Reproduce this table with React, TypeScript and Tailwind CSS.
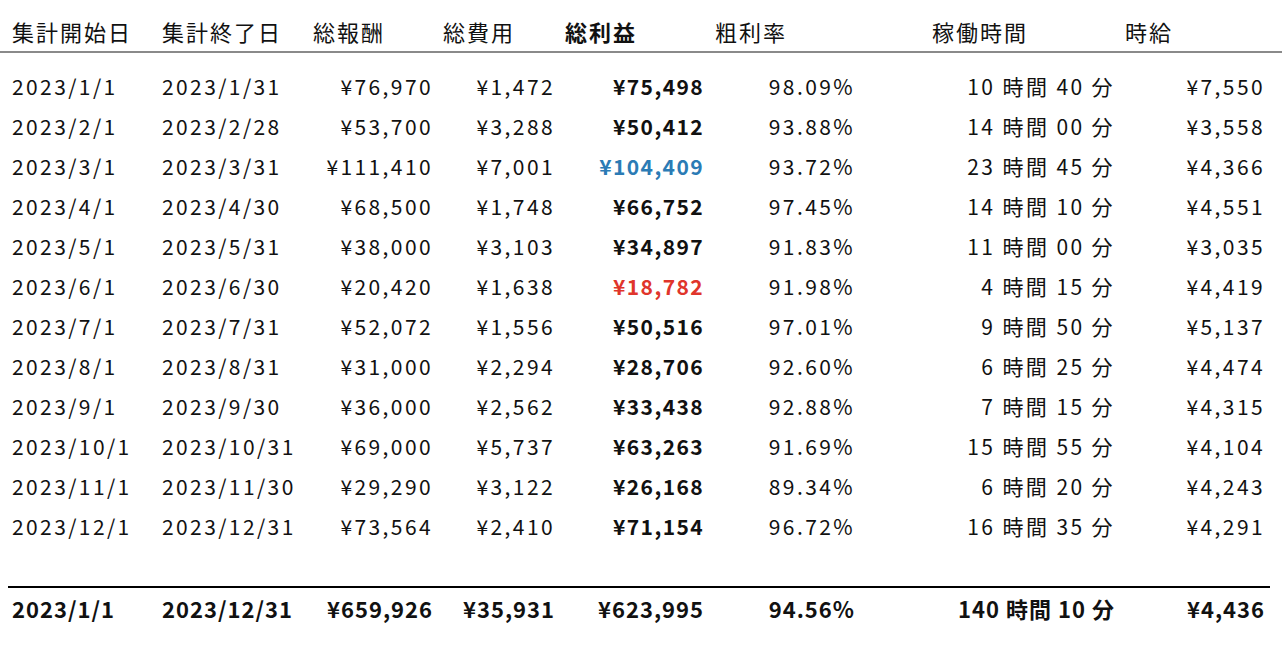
const headers = ['集計開始日', '集計終了日', '総報酬', '総費用', '総利益', '粗利率', '稼働時間', '時給'];

type Row = {
  start: string;
  end: string;
  revenue: string;
  cost: string;
  profit: string;
  margin: string;
  hours: string;
  wage: string;
  tone?: 'max' | 'min';
};

const rows: Row[] = [
  { start: '2023/1/1', end: '2023/1/31', revenue: '¥76,970', cost: '¥1,472', profit: '¥75,498', margin: '98.09%', hours: '10 時間 40 分', wage: '¥7,550' },
  { start: '2023/2/1', end: '2023/2/28', revenue: '¥53,700', cost: '¥3,288', profit: '¥50,412', margin: '93.88%', hours: '14 時間 00 分', wage: '¥3,558' },
  { start: '2023/3/1', end: '2023/3/31', revenue: '¥111,410', cost: '¥7,001', profit: '¥104,409', margin: '93.72%', hours: '23 時間 45 分', wage: '¥4,366', tone: 'max' },
  { start: '2023/4/1', end: '2023/4/30', revenue: '¥68,500', cost: '¥1,748', profit: '¥66,752', margin: '97.45%', hours: '14 時間 10 分', wage: '¥4,551' },
  { start: '2023/5/1', end: '2023/5/31', revenue: '¥38,000', cost: '¥3,103', profit: '¥34,897', margin: '91.83%', hours: '11 時間 00 分', wage: '¥3,035' },
  { start: '2023/6/1', end: '2023/6/30', revenue: '¥20,420', cost: '¥1,638', profit: '¥18,782', margin: '91.98%', hours: '4 時間 15 分', wage: '¥4,419', tone: 'min' },
  { start: '2023/7/1', end: '2023/7/31', revenue: '¥52,072', cost: '¥1,556', profit: '¥50,516', margin: '97.01%', hours: '9 時間 50 分', wage: '¥5,137' },
  { start: '2023/8/1', end: '2023/8/31', revenue: '¥31,000', cost: '¥2,294', profit: '¥28,706', margin: '92.60%', hours: '6 時間 25 分', wage: '¥4,474' },
  { start: '2023/9/1', end: '2023/9/30', revenue: '¥36,000', cost: '¥2,562', profit: '¥33,438', margin: '92.88%', hours: '7 時間 15 分', wage: '¥4,315' },
  { start: '2023/10/1', end: '2023/10/31', revenue: '¥69,000', cost: '¥5,737', profit: '¥63,263', margin: '91.69%', hours: '15 時間 55 分', wage: '¥4,104' },
  { start: '2023/11/1', end: '2023/11/30', revenue: '¥29,290', cost: '¥3,122', profit: '¥26,168', margin: '89.34%', hours: '6 時間 20 分', wage: '¥4,243' },
  { start: '2023/12/1', end: '2023/12/31', revenue: '¥73,564', cost: '¥2,410', profit: '¥71,154', margin: '96.72%', hours: '16 時間 35 分', wage: '¥4,291' },
];

const total: Row = {
  start: '2023/1/1', end: '2023/12/31', revenue: '¥659,926', cost: '¥35,931', profit: '¥623,995', margin: '94.56%', hours: '140 時間 10 分', wage: '¥4,436',
};

// shared column tracks so header, body and footer line up
const cols = 'grid grid-cols-[138px_139px_118px_110px_138px_138px_248px_138px] gap-x-[12px] pl-[12px]';

function DataRow({ row, className }: { row: Row; className?: string }) {
  const profitColor =
    row.tone === 'max' ? 'text-[#2b7bb5]' : row.tone === 'min' ? 'text-[#e0352b]' : '';
  // -mr-[2px] cancels the trailing letter-spacing on right-aligned cells
  return (
    <div className={`${cols} h-[40px] items-center whitespace-nowrap ${className ?? ''}`}>
      <div>{row.start}</div>
      <div>{row.end}</div>
      <div className="text-right -mr-[2px]">{row.revenue}</div>
      <div className="text-right -mr-[2px]">{row.cost}</div>
      <div className={`text-right -mr-[1px] font-bold tracking-[1.4px] ${profitColor}`}>{row.profit}</div>
      <div className="text-right -mr-[2px]">{row.margin}</div>
      <div className="text-right -mr-[2px]">{row.hours}</div>
      <div className="text-right -mr-[2px]">{row.wage}</div>
    </div>
  );
}

export default function App() {
  return (
    <div className="w-[1282px] h-[666px] bg-white text-[#111] font-['Noto_Sans_CJK_JP',sans-serif] overflow-hidden">
      {/* Header */}
      <div className={`${cols} mt-[12px] h-[41px] items-center border-b-2 border-[#8a8a8a] text-[22px] tracking-[2px]`}>
        {headers.map((h, i) => (
          <div key={h} className={`${i === 4 ? 'font-bold' : ''} ${i === 6 ? 'pl-[67px]' : ''}`}>
            {h}
          </div>
        ))}
      </div>

      {/* Monthly rows */}
      <div className="mt-[14px] text-[21px] tracking-[2.4px]">
        {rows.map(r => (
          <DataRow key={r.start} row={r} />
        ))}
      </div>

      {/* Totals */}
      <div className="mt-[39px] ml-[8px] mr-[12px] border-t-2 border-black">
        <DataRow row={total} className="-ml-[8px] h-[36px] text-[22px] font-bold tracking-[1px] [&>div]:tracking-[1px]" />
      </div>
    </div>
  );
}
